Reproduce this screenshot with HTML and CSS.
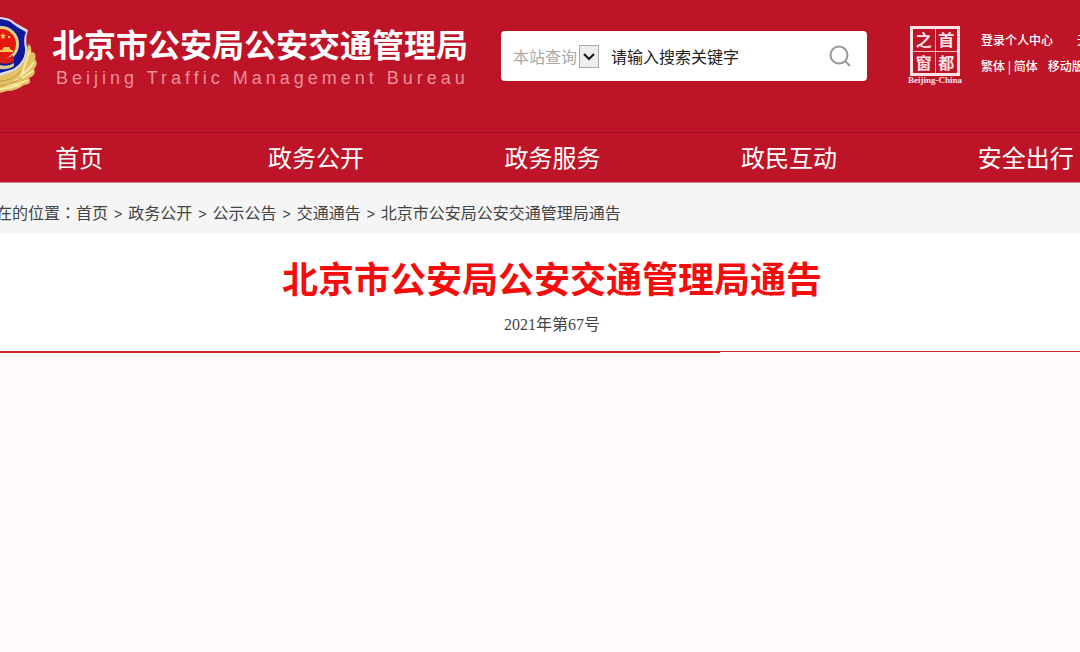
FILE: index.html
```html
<!DOCTYPE html>
<html lang="zh-CN">
  <head>
    <meta charset="UTF-8" />
    <meta name="viewport" content="width=device-width, initial-scale=1" />
    <title>北京市公安局公安交通管理局通告</title>
    <link rel="stylesheet" href="styles.css">
  </head>
  <body>
    <header class="header">
      <a class="brand" href="#">
        <svg class="emblem" viewBox="0 0 38 80" aria-hidden="true">
          <path d="M0 57 L18 52 C20 46 23 38 29 28 Q32 31 31 36 Q37 36 35 43 Q39 48 34 53 Q37 59 29 62 Q33 68 24 69 Q16 75 7 75 L0 77Z" fill="#e3c063" />
          <path d="M22 58 Q25 47 30 34 M20 60 Q28 55 34 46 M15 65 Q25 61 33 55 M6 69 Q19 69 28 64 M0 73 Q10 72 20 69" fill="none" stroke="#f8eaa6" stroke-width="2" />
          <path d="M0 65 Q12 65 21 55 M0 70 Q12 69 22 62" fill="none" stroke="#c59a3d" />
          <path d="M0 1 Q11 2 14 6 Q19 9 28 14 Q25 22 27 31 Q28 46 14 55 L0 60Z" fill="#d9dcec" />
          <path d="M0 3 Q10 4 13 8 Q18 12 26 16 Q23 23 25 32 Q26 45 13 53 L0 57Z" fill="#10189c" />
          <circle cx="1" cy="28" r="18" fill="#ead08a" />
          <circle cx="1" cy="28" r="15" fill="#e5190f" />
          <path d="M3 17 l1 2 2 0 -2 2 1 2 -2 -1 -2 1 1 -2 -2 -2 2 0Z M8 20 h2 v2 h-2Z M0 34 h2 l2 -3 h5 l2 3 h2 v2 H0Z" fill="#f4c95b" />
          <path d="M0 40 Q8 44 13 39 L14 46 Q7 49 0 47Z" fill="#d71e18" />
          <path d="M0 49 Q8 51 14 47 L14 50 Q8 54 0 53Z" fill="#d8c690" />
        </svg>
        <span class="brand-text">
          <strong class="brand-name">北京市公安局公安交通管理局</strong>
          <span class="brand-en" lang="en">Beijing Traffic Management Bureau</span>
        </span>
      </a>

      <form class="search">
        <select class="scope" aria-label="查询范围">
          <option>本站查询</option>
        </select>
        <svg class="arrow" viewBox="0 0 20 23" aria-hidden="true">
          <rect x="0.5" y="0.5" width="19" height="22" fill="#eee" stroke="#aaa" />
          <path d="M5 9 L10 14 L15 9" fill="none" stroke="#111" stroke-width="2" />
        </svg>
        <input class="keyword" type="text" aria-label="搜索关键字" placeholder="请输入搜索关键字" />
        <button class="search-btn" type="submit" aria-label="搜索">
          <svg viewBox="0 0 22 22" width="22" height="22" fill="none" stroke="#999" stroke-width="2">
            <circle cx="10" cy="10" r="8.5" />
            <path d="M16 16 L21 21" />
          </svg>
        </button>
      </form>

      <a class="capital" href="#">
        <span class="seal">
          <span>之</span><span>首</span><span>窗</span><span>都</span>
        </span>
        <span class="capital-en" lang="en">Beijing-China</span>
      </a>

      <div class="tools">
        <div class="tools-row account"><a href="#">登录个人中心</a><a href="#">无障碍</a></div>
        <div class="tools-row">
          <span><a href="#">繁体</a> | <a href="#">简体</a></span>
          <a href="#">移动版</a>
        </div>
      </div>
    </header>

    <nav class="nav">
      <ul class="nav-list">
        <li><a href="#">首页</a></li>
        <li><a href="#">政务公开</a></li>
        <li><a href="#">政务服务</a></li>
        <li><a href="#">政民互动</a></li>
        <li><a href="#">安全出行</a></li>
      </ul>
    </nav>

    <div class="crumbs">
      <span>在的位置<span class="colon" lang="zh-TW">：</span></span><a href="#">首页</a><i>&gt;</i><a href="#">政务公开</a><i>&gt;</i><a href="#">公示公告</a><i>&gt;</i><a href="#">交通通告</a><i>&gt;</i><span>北京市公安局公安交通管理局通告</span>
    </div>

    <main class="notice">
      <h1>北京市公安局公安交通管理局通告</h1>
      <p class="number">2021年第67号</p>
    </main>
    <div class="rule"></div>
  </body>
</html>
```

FILE: styles.css
```css
* {
  box-sizing: border-box;
}
body {
  margin: 0;
  background: #fffbfa;
  color: #444;
  font-family: "Noto Sans CJK SC", sans-serif;
  font-size: 16px;
  overflow-x: hidden;
}
a {
  color: inherit;
  text-decoration: none;
}

/* header */
.header {
  display: flex;
  align-items: flex-start;
  height: 132px;
  padding-top: 16px;
  background: #be1428;
  color: #fff;
  overflow: hidden;
}
.brand {
  display: flex;
  flex: none;
  width: 501px;
}
.emblem {
  width: 38px;
  height: 80px;
  margin-right: 14px;
}
.brand-text {
  display: flex;
  flex-direction: column;
  padding-top: 8px;
  white-space: nowrap;
}
.brand-name {
  font-size: 32px;
  line-height: 38px;
}
.brand-en {
  padding-left: 4px;
  color: #ec8f98;
  font-family: "Liberation Sans", Arial, sans-serif;
  font-size: 18px;
  line-height: 32px;
  letter-spacing: 4px;
}

/* search box */
.search {
  display: flex;
  flex: none;
  align-items: center;
  width: 366px;
  height: 50px;
  margin-top: 15px;
  padding: 0 16px 0 12px;
  background: #fff;
  border-radius: 4px;
}
.scope {
  width: 66px;
  padding: 0;
  border: none;
  background: none;
  color: #aaa;
  font: inherit;
  appearance: none;
}
.arrow {
  width: 20px;
  height: 23px;
}
.keyword {
  flex: 1;
  min-width: 0;
  padding: 0 12px;
  border: none;
  outline: none;
  font: inherit;
}
.keyword::placeholder {
  color: #222;
}
.search-btn {
  display: flex;
  padding: 0;
  border: none;
  background: none;
  cursor: pointer;
}

/* capital window seal */
.capital {
  display: flex;
  flex: none;
  flex-direction: column;
  align-items: center;
  width: 56px;
  margin: 10px 18px 0 40px;
}
.seal {
  display: grid;
  grid-template-columns: 1fr 1fr;
  gap: 1px;
  width: 50px;
  height: 50px;
  border: 3px solid #fbe3e5;
  background: #f3b9bf;
}
.seal span {
  background: #be1428;
  color: #fbe3e5;
  font-size: 16px;
  font-weight: bold;
  line-height: 21px;
  text-align: center;
}
.capital-en {
  color: #fbe3e5;
  font-family: "Liberation Serif", serif;
  font-size: 9px;
  font-weight: bold;
  line-height: 8px;
}

.tools {
  flex: none;
  padding-top: 11px;
  font-size: 12px;
  font-weight: 500;
  line-height: 26px;
  white-space: nowrap;
}
.tools-row {
  display: flex;
  gap: 10px;
}
.account {
  gap: 24px;
}

/* nav */
.nav {
  border-top: 1px solid #9c1020;
  border-bottom: 1px solid #d97a84;
  background: #be1428;
  overflow: hidden;
}
.nav-list {
  display: grid;
  grid-template-columns: repeat(5, 1fr);
  margin: 0 -64px 0 -39px;
  padding: 0 0 2px;
  list-style: none;
}
.nav-list a {
  display: block;
  color: #fff;
  font-size: 24px;
  line-height: 47px;
  text-align: center;
}

/* breadcrumb */
.crumbs {
  height: 50px;
  background: #f5f5f5;
  line-height: 58px;
  white-space: nowrap;
  text-indent: -4px;
  overflow: hidden;
}
.crumbs i {
  padding: 0 6px;
  font-family: "Liberation Sans", Arial, sans-serif;
  font-size: 14px;
  font-style: normal;
}
.colon {
  font-family: "Noto Sans CJK TC", sans-serif;
}

/* notice */
.notice {
  padding: 20px 0 2px 24px;
  background: #fff;
  text-align: center;
}
.notice h1 {
  margin: 0;
  color: #f50d0d;
  font-size: 36px;
  line-height: 48px;
}
.number {
  margin: 0;
  font-family: "Liberation Serif", "Noto Sans CJK SC", serif;
  line-height: 48px;
}
.rule {
  height: 3px;
  border-top: 1px solid #cf2a2e;
}
.rule::before {
  content: "";
  display: block;
  width: 66.667%;
  height: 1px;
  background: #cf2a2e;
}
```
